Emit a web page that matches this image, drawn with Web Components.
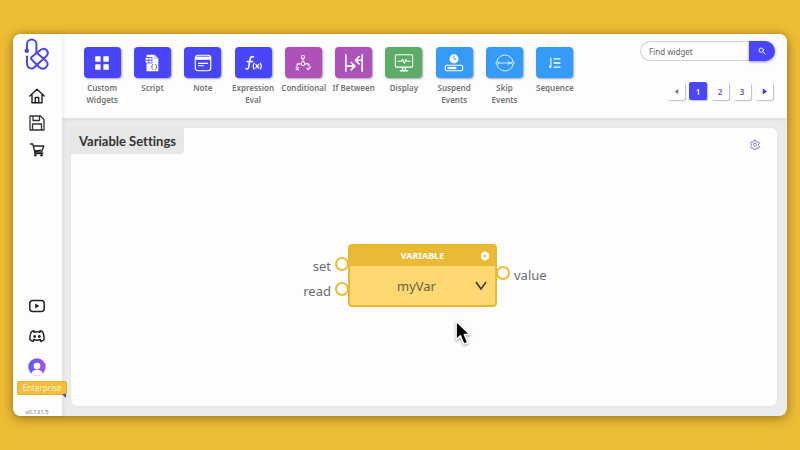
<!DOCTYPE html>
<html lang="en">
<head>
<meta charset="utf-8">
<meta name="viewport" content="width=device-width, initial-scale=1">
<title>Variable Settings</title>
<style>
  html { height: 100%; }
  body {
    margin: 0;
    height: 100%;
    background: #edbd35;
    color: #666;
    font-family: 'Noto Sans', 'Open Sans', sans-serif;
  }
</style>
</head>
<body>
<flow-app></flow-app>

<script>
const WIDGETS = [
  { label: 'Custom Widgets',  color: '#4945fb', icon: 'grid' },
  { label: 'Script',          color: '#4945fb', icon: 'script' },
  { label: 'Note',            color: '#4945fb', icon: 'note' },
  { label: 'Expression Eval', color: '#4945fb', icon: 'fx' },
  { label: 'Conditional',     color: '#ae52b9', icon: 'branch' },
  { label: 'If Between',      color: '#ae52b9', icon: 'between' },
  { label: 'Display',         color: '#5dac65', icon: 'display' },
  { label: 'Suspend Events',  color: '#359bf8', icon: 'suspend' },
  { label: 'Skip Events',     color: '#359bf8', icon: 'skip' },
  { label: 'Sequence',        color: '#359bf8', icon: 'sequence' },
]

// viewBox + body of every glyph
const ICONS = {
  logo: ['0 0 26 34', `<g fill="none" stroke="#4b48e8" stroke-width="2" stroke-linecap="round" stroke-linejoin="round">
    <path d="M3 12V6.200a4.700 4.700 0 0 1 9.400 0V14.500"/>
    <path d="M3 18.500V25c0 5.500 4.700 7 7.700 4L22 18.500c4.500-4.500-.7-10-5.500-6.500L7.700 19c-1 .8-1 1.600 0 2.500l7.300 7.500c4.800 4.500 11-1.200 7.300-6L12.400 14.500"/></g>
    <circle cx="2.800" cy="12.800" r="2.300" fill="#4b48e8"/>`],
  home: ['0 0 16 16', `<g fill="none" stroke="#222" stroke-width="1.400" stroke-linejoin="round" stroke-linecap="round">
    <path d="M.8 8 8 1.200 15.200 8M3 6.500v8.300h10V6.500"/><path d="M6.300 14.500v-5h3.400v5"/></g>`],
  save: ['0 0 16 16', `<g fill="none" stroke="#333" stroke-width="1.300" stroke-linejoin="round">
    <path d="M1 1h10.500L15 4.500V15H1z"/><path d="M4 1v4.500h6.500V1M3.500 15V9h9v6"/></g>`],
  cart: ['0 0 16 16', `<g fill="none" stroke="#222" stroke-width="1.300" stroke-linejoin="round" stroke-linecap="round">
    <path d="M1.500 2h2.300l2 8h7.500M4.200 4h10.500l-1.400 4.200-8 .6"/><path d="M5.800 10v1.500h8"/></g>
    <circle cx="6.300" cy="13.300" r="1.200" fill="#222"/><circle cx="12.500" cy="13.300" r="1.200" fill="#222"/>`],
  youtube: ['0 0 16 16', `<rect x=".8" y="2.500" width="14.400" height="11" rx="3" fill="none" stroke="#222" stroke-width="1.500"/>
    <path d="M6.200 5.600v4.800L10.400 8z" fill="#222"/>`],
  discord: ['0 0 16 16', `<g fill="none" stroke="#222" stroke-width="1.400" stroke-linejoin="round" stroke-linecap="round">
    <path d="M5 4.200c2-.6 4-.6 6 0M4.500 11.500c2.300.9 4.700.9 7 0"/>
    <path d="m5.600 4-.6-1.300C3.800 3 2.900 3.400 2.300 3.900 1.300 6 .7 8.500.8 11.600c1 1 2 1.500 3.300 1.900l1-1.800M10.400 4l.6-1.300c1.200.3 2.100.7 2.700 1.200 1 2.100 1.600 4.600 1.500 7.700-1 1-2 1.500-3.300 1.900l-1-1.800"/></g>
    <circle cx="5.700" cy="8.500" r="1.400" fill="#222"/><circle cx="10.300" cy="8.500" r="1.400" fill="#222"/>`],
  avatar: ['0 0 18 18', `<defs><linearGradient id="g"><stop stop-color="#5a5cf5"/><stop offset="1" stop-color="#a855e8"/></linearGradient>
    <clipPath id="c"><circle cx="9" cy="9" r="8.700"/></clipPath></defs>
    <circle cx="9" cy="9" r="8.700" fill="url(#g)"/>
    <g clip-path="url(#c)" fill="#fff"><circle cx="9" cy="8" r="3.300"/><path d="M3 18c0-4 2-6.200 6-6.200s6 2.200 6 6.200z"/></g>`],
  grid: ['0 0 22 22', `<g fill="#fff"><rect x="3.500" y="3.500" width="6" height="6" rx=".6"/><rect x="12.500" y="3.500" width="6" height="6" rx=".6"/>
    <rect x="3.500" y="12.500" width="6" height="6" rx=".6"/><rect x="12.500" y="12.500" width="6" height="6" rx=".6"/></g>`],
  script: ['0 0 22 22', `<path d="M5 2h9l4 4v14H5z" fill="#fff"/><path d="M14 2v4h4" fill="none" stroke="#8f8cfc" stroke-width=".8"/>
    <rect x="3.500" y="5" width="7.500" height="6" fill="#fff" stroke="#4945fb" stroke-width=".8"/><path d="M4 8h7M7.500 5v6" stroke="#4945fb" stroke-width=".9"/>
    <path d="M12.300 12c-2 1.500-2 5 0 6.500M14.500 12c2 1.500 2 5 0 6.500" fill="none" stroke="#4945fb" stroke-width="1"/>`],
  note: ['0 0 22 22', `<rect x="2.500" y="2.500" width="17" height="17" rx="3" fill="none" stroke="#fff" stroke-width="1.300"/>
    <path d="M2.500 4h17v3.500h-17z" fill="#fff"/><path d="M5.500 11.500h11M5.500 14h6.500" stroke="#fff" stroke-width="1.300"/>`],
  fx: ['0 0 22 22', `<g fill="none" stroke="#fff" stroke-linecap="round" stroke-width="1.800">
    <path d="M11.500 4.300c-2.300-1-3.200.2-3.700 2.700L6.300 15.300C5.800 17.700 5 18 3.300 17.300M4.800 9.300h5.700"/>
    <path stroke-width="1.400" d="M12.300 11.300c-1.300 2-1.300 4.600 0 6.400M19 11.300c1.300 2 1.300 4.600 0 6.400M14.200 12.700l3 3.500M17.200 12.700l-3 3.500"/></g>`],
  branch: ['0 0 22 22', `<g fill="none" stroke="#fff" stroke-width="1.200"><circle cx="11" cy="4.500" r="1.800"/>
    <path d="M11 6.500v3.200M4.500 15v-2q0-1 1-1H9M13 12h3.500q1 0 1 1v2"/><circle cx="11" cy="11.700" r="2"/><path d="m3 15.500 3.500 3.500M6.500 15.500 3 19M15 16.500l1.700 1.700 3-3.200"/></g>`],
  between: ['0 0 22 22', `<g fill="none" stroke="#fff" stroke-width="1.800" stroke-linecap="round" stroke-linejoin="round">
    <path d="M2 2v18M20 2v18M3 14.500h8.500M8 10.500l4 4-4 4M19 8h-6.500M16.500 4l-4 4 4 4"/></g>`],
  display: ['0 0 22 22', `<g fill="none" stroke="#fff" stroke-width="1.200" stroke-linejoin="round">
    <rect x="1.500" y="2" width="19" height="13.500" rx="1.200"/><path d="M4 9h4l1.500-2 2 4.500L13 7l1 2h4"/><path d="M9.500 15.500v3M12.500 15.500v3M6.500 19.500h9" stroke-width="1.500"/></g>`],
  suspend: ['0 0 22 22', `<circle cx="11" cy="6.500" r="5" fill="#fff"/><path d="M11 3.500v3.300h2.500" fill="none" stroke="#359bf8" stroke-width="1.100"/>
    <rect x="1.500" y="13.500" width="19" height="6" rx="1.500" fill="none" stroke="#fff" stroke-width="1.300"/><path d="M4 15.300h9.500v2.400H4z" fill="#fff"/>`],
  skip: ['0 0 22 22', `<g fill="none" stroke="#fff" stroke-width=".9"><path d="M2 9.500a9.200 9.200 0 0 1 18 0M2 12.500a9.200 9.200 0 0 0 18 0M4 11h14"/>
    <circle cx="2.500" cy="11" r="1.400"/><circle cx="19.500" cy="11" r="1.400"/><path d="m14 9 2.500 2-2.500 2"/></g>`],
  sequence: ['0 0 22 22', `<g fill="none" stroke="#fff" stroke-width="1.400"><path d="M9.500 6.500H17M9.500 11H17M9.500 15.500H17"/><path d="M6.500 5v11M4.300 14l2.200 2.300" stroke-width="1.200"/></g>`],
  search: ['0 0 10 10', `<g fill="none" stroke="#fff" stroke-width="1.100" stroke-linecap="round"><circle cx="4" cy="4" r="2.700"/><path d="M6.200 6.200 9 9"/></g>`],
  prev: ['0 0 8 8', `<path d="M6 1v6L2 4z" fill="#777"/>`],
  next: ['0 0 8 8', `<path d="M2 .5v7L6.800 4z" fill="#4a2fd0"/>`],
  gear: ['0 0 20 20', `<g fill="none" stroke="currentColor" stroke-width="1.700" stroke-linejoin="round"><circle cx="10" cy="10" r="3"/>
    <path d="M8 1.500h4l.6 2.700 1.900 1.100 2.600-.8 2 3.400-2 1.900v2.400l2 1.900-2 3.400-2.600-.8-1.900 1.100-.6 2.700H8l-.6-2.700-1.900-1.100-2.600.8-2-3.400 2-1.900V9.800l-2-1.900 2-3.400 2.600.8 1.900-1.100z"/></g>`],
  cog: ['0 0 20 20', `<path fill="#fff" fill-rule="evenodd" d="M7.500 1h5l.7 2.600 2.600-.8 2.700 4.200-1.800 3 1.800 3-2.700 4.200-2.600-.8-.7 2.600h-5l-.7-2.600-2.600.8L1.500 13l1.800-3-1.800-3 2.700-4.200 2.600.8zM10 7.500a2.500 2.500 0 1 0 0 5 2.500 2.500 0 0 0 0-5"/>`],
  pointer: ['0 0 16 26', `<path d="M2 2v17.500l4-3.800 3.200 7.800 3.800-1.600-3.300-7.600H15z" fill="#000" stroke="#fff" stroke-width="1.400" stroke-linejoin="round"/>`],
}

class UiIcon extends HTMLElement {
  connectedCallback() {
    if (!this.shadowRoot) this.attachShadow({ mode: 'open' })
    const [box, body] = ICONS[this.getAttribute('name')]
    this.shadowRoot.innerHTML = `
      <style>
        :host { display: block; flex-shrink: 0; }
        svg { display: block; width: 100%; height: 100%; }
      </style>
      <svg viewBox="${box}" aria-hidden="true">${body}</svg>
    `
  }
}

class SideBar extends HTMLElement {
  connectedCallback() {
    if (!this.shadowRoot) this.attachShadow({ mode: 'open' })
    this.shadowRoot.innerHTML = `
      <style>
        :host {
          display: flex;
          flex-direction: column;
          align-items: center;
          box-sizing: border-box;
          width: 49px;
          padding: 4px 1px 0 0;
          background: #fdfdfd;
          box-shadow: 1px 0 5px rgba(0,0,0,.08);
          border-radius: 8px 0 0 8px;
          z-index: 1;
        }
        a { display: block; }
        ui-icon { width: 16px; height: 16px; }
        .logo ui-icon { width: 26px; height: 34px; }
        nav { display: flex; flex-direction: column; gap: 11px; margin-top: 16px; }
        .social { display: flex; flex-direction: column; gap: 14px; align-items: center; margin-top: auto; }
        .social .user { width: 18px; height: 18px; }
        .plan {
          position: relative;
          box-sizing: border-box;
          width: 50px;
          margin: 5px -10px 0 0;
          border: 1px solid #e5b02c;
          border-radius: 2px;
          background: #f3bd3c;
          color: #fff5d8;
          font-size: 8px;
          line-height: 12px;
          text-align: center;
        }
        .plan::after {
          content: '';
          position: absolute;
          right: 0;
          top: 100%;
          border: 2px solid transparent;
          border-top-color: #3552a8;
          border-right-color: #3552a8;
        }
        .version { margin-top: 13px; font-size: 6px; line-height: 8px; color: #777; }
      </style>
      <a class="logo" href="#" aria-label="Start"><ui-icon name="logo"></ui-icon></a>
      <nav>
        <a href="#home" aria-label="Home"><ui-icon name="home"></ui-icon></a>
        <a href="#save" aria-label="Save"><ui-icon name="save"></ui-icon></a>
        <a href="#store" aria-label="Store"><ui-icon name="cart"></ui-icon></a>
      </nav>
      <div class="social">
        <a href="#videos" aria-label="Videos"><ui-icon name="youtube"></ui-icon></a>
        <a href="#chat" aria-label="Chat"><ui-icon name="discord"></ui-icon></a>
        <a href="#account" aria-label="Account"><ui-icon class="user" name="avatar"></ui-icon></a>
      </div>
      <span class="plan">Enterprise</span>
      <span class="version">v0.131.5</span>
    `
  }
}

class WidgetButton extends HTMLElement {
  connectedCallback() {
    if (!this.shadowRoot) this.attachShadow({ mode: 'open' })
    this.shadowRoot.innerHTML = `
      <style>
        :host { display: block; min-width: 0; }
        button {
          display: flex;
          flex-direction: column;
          align-items: center;
          gap: 4px;
          width: 100%;
          padding: 0;
          border: 0;
          background: none;
          color: #747474;
          font: 600 8px/12px 'Noto Sans', 'Open Sans', sans-serif;
          cursor: pointer;
        }
        .tile {
          display: grid;
          place-items: center;
          width: 37px;
          height: 31px;
          border-radius: 4px;
          background: ${this.getAttribute('color')};
          box-shadow: 1px 1px 2px rgba(60,60,110,.45);
        }
        .label { max-width: 44px; }
        ui-icon { width: 20px; height: 20px; }
      </style>
      <button type="button">
        <span class="tile"><ui-icon name="${this.getAttribute('icon')}"></ui-icon></span>
        <span class="label"><slot></slot></span>
      </button>
    `
  }
}

class WidgetSearch extends HTMLElement {
  connectedCallback() {
    if (!this.shadowRoot) this.attachShadow({ mode: 'open' })
    this.shadowRoot.innerHTML = `
      <style>
        :host { display: block; }
        form { display: flex; width: 135px; height: 20px; }
        input {
          flex: 1;
          min-width: 0;
          box-sizing: border-box;
          padding: 0 8px;
          border: 1px solid #d0d0d0;
          border-right: 0;
          border-radius: 10px 0 0 10px;
          background: #fefefe;
          color: #555;
          font: 8px 'Noto Sans', 'Open Sans', sans-serif;
          outline: 0;
        }
        input::placeholder { color: #666; opacity: 1; }
        button {
          display: grid;
          place-items: center;
          width: 26px;
          padding: 0;
          border: 0;
          border-radius: 0 10px 10px 0;
          background: #4945fb;
          box-shadow: 0 1px 3px rgba(73,69,251,.6);
        }
        ui-icon { width: 8px; height: 8px; }
      </style>
      <form onsubmit="return false">
        <input type="text" placeholder="Find widget" aria-label="Find widget">
        <button aria-label="Search"><ui-icon name="search"></ui-icon></button>
      </form>
    `
  }
}

class PageSwitch extends HTMLElement {
  connectedCallback() {
    if (!this.shadowRoot) this.attachShadow({ mode: 'open' })
    this.shadowRoot.innerHTML = `
      <style>
        :host { display: flex; gap: 4px; }
        button {
          display: grid;
          place-items: center;
          width: 18px;
          height: 18px;
          padding: 0;
          border: 0;
          border-radius: 2px;
          background: #fdfdfd;
          box-shadow: 1px 1px 1px rgba(0,0,0,.25);
          color: #6a58c4;
          font: 600 8px 'Noto Sans', 'Open Sans', sans-serif;
        }
        .on { background: #4945fb; color: #fff; }
        ui-icon { width: 7px; height: 7px; }
      </style>
      <button type="button" aria-label="Previous"><ui-icon name="prev"></ui-icon></button>
      ${[1, 2, 3].map(n => `<button type="button" class="${n === 1 ? 'on' : ''}">${n}</button>`).join('')}
      <button type="button" aria-label="Next"><ui-icon name="next"></ui-icon></button>
    `
  }
}

class ToolBar extends HTMLElement {
  connectedCallback() {
    if (!this.shadowRoot) this.attachShadow({ mode: 'open' })
    this.shadowRoot.innerHTML = `
      <style>
        :host {
          display: flex;
          justify-content: space-between;
          box-sizing: border-box;
          min-height: 84px;
          padding: 0 12px 0 15px;
          background: #fdfdfd;
          border-radius: 0 8px 0 0;
          box-shadow: 0 1px 4px rgba(0,0,0,.08);
        }
        .widgets {
          display: grid;
          grid-template-columns: repeat(10, 1fr);
          width: 503px;
          padding-top: 13px;
        }
        .tools {
          display: flex;
          flex-direction: column;
          align-items: flex-end;
          gap: 21px;
          padding-top: 7px;
        }
        page-switch { margin-right: 2px; }
      </style>
      <div class="widgets">
        ${WIDGETS.map(w => `<widget-button icon="${w.icon}" color="${w.color}">${w.label}</widget-button>`).join('')}
      </div>
      <div class="tools">
        <widget-search></widget-search>
        <page-switch></page-switch>
      </div>
    `
  }
}

class FlowNode extends HTMLElement {
  connectedCallback() {
    if (!this.shadowRoot) this.attachShadow({ mode: 'open' })
    this.shadowRoot.innerHTML = `
      <style>
        :host { display: flex; font-size: 13px; line-height: 18px; color: #6c6c6c; }
        .ports { display: flex; flex-direction: column; gap: 7px; padding-top: 13px; width: 50px; }
        .ports.out { padding-top: 22px; }
        .port { display: flex; justify-content: flex-end; gap: 4px; margin-right: -1px; }
        .out .port { justify-content: flex-start; margin: 0 0 0 -1px; }
        .dot {
          box-sizing: border-box;
          flex-shrink: 0;
          width: 14px;
          height: 14px;
          border: 2px solid #ecbc38;
          border-radius: 50%;
          background: #fff;
          z-index: 1;
        }
        .box {
          box-sizing: border-box;
          width: 149px;
          height: 63px;
          border: 2px solid #e9b833;
          border-radius: 4px;
          background: #fed971;
        }
        header {
          display: grid;
          grid-template-columns: 20px 1fr 20px;
          align-items: center;
          height: 20px;
          background: #ebba35;
          color: #fff;
          font-size: 9px;
          font-weight: 700;
          text-align: center;
        }
        header button { display: grid; place-items: center; grid-column: 3; grid-row: 1; height: 20px; padding: 0; border: 0; background: none; }
        header span { grid-column: 2; grid-row: 1; }
        header ui-icon { width: 10px; height: 10px; }
        .pick { display: grid; align-items: center; height: 39px; }
        select, .pick svg { grid-area: 1 / 1; }
        select {
          appearance: none;
          width: 100%;
          height: 100%;
          padding: 0 24px 0 12px;
          border: 0;
          background: none;
          color: #6b6046;
          font: 13px 'Noto Sans', 'Open Sans', sans-serif;
          text-align-last: center;
        }
        .pick svg { justify-self: end; width: 12px; height: 9px; margin-right: 8px; pointer-events: none; }
      </style>
      <div class="ports">
        <div class="port"><span>set</span><i class="dot"></i></div>
        <div class="port"><span>read</span><i class="dot"></i></div>
      </div>
      <div class="box">
        <header><span>VARIABLE</span><button type="button" aria-label="Settings"><ui-icon name="cog"></ui-icon></button></header>
        <div class="pick">
          <select aria-label="Variable"><option>myVar</option></select>
          <svg viewBox="0 0 12 9"><path d="m1 1 5 7 5-7" fill="none" stroke="#333" stroke-width="1.500"/></svg>
        </div>
      </div>
      <div class="ports out">
        <div class="port"><i class="dot"></i><span>value</span></div>
      </div>
    `
  }
}

class FlowCanvas extends HTMLElement {
  connectedCallback() {
    if (!this.shadowRoot) this.attachShadow({ mode: 'open' })
    this.shadowRoot.innerHTML = `
      <style>
        :host {
          display: block;
          position: relative;
          background: #fdfdfd;
          border-radius: 0 6px 6px 6px;
          box-shadow: 0 0 3px rgba(0,0,0,.06);
        }
        .head { display: flex; justify-content: space-between; align-items: flex-start; }
        h1 {
          margin: 0;
          padding: 0 8px;
          border-radius: 0 0 4px 0;
          background: #e7e7e7;
          color: #333;
          font: 700 13px/26px Lato, sans-serif;
          font-variant-ligatures: none;
        }
        .head button { margin: 11px 17px 0 0; padding: 0; border: 0; background: none; color: #6a5fd0; }
        .head ui-icon { width: 10px; height: 11px; }
        /* free canvas: items sit at their own coordinates */
        flow-node { position: absolute; left: 227px; top: 116px; }
        .pointer {
          position: absolute;
          left: 383px;
          top: 191px;
          width: 17px;
          height: 28px;
          filter: drop-shadow(0 1px 1px rgba(0,0,0,.4));
        }
      </style>
      <div class="head">
        <h1><slot></slot></h1>
        <button type="button" aria-label="Canvas settings"><ui-icon name="gear"></ui-icon></button>
      </div>
      <flow-node></flow-node>
      <ui-icon class="pointer" name="pointer"></ui-icon>
    `
  }
}

class FlowApp extends HTMLElement {
  connectedCallback() {
    if (!this.shadowRoot) this.attachShadow({ mode: 'open' })
    this.shadowRoot.innerHTML = `
      <style>
        :host { display: flex; box-sizing: border-box; min-height: 100%; padding: 34px 13px; }
        .window {
          flex: 1;
          display: flex;
          min-width: 0;
          border-radius: 8px;
          background: #ebebeb;
          box-shadow: 0 2px 12px rgba(90,60,0,.6);
        }
        main { flex: 1; display: flex; flex-direction: column; min-width: 0; }
        flow-canvas { flex: 1; margin: 10px 10px 10px 9px; }
      </style>
      <div class="window">
        <side-bar></side-bar>
        <main>
          <tool-bar></tool-bar>
          <flow-canvas>Variable Settings</flow-canvas>
        </main>
      </div>
    `
  }
}

customElements.define('ui-icon', UiIcon)
customElements.define('side-bar', SideBar)
customElements.define('widget-button', WidgetButton)
customElements.define('widget-search', WidgetSearch)
customElements.define('page-switch', PageSwitch)
customElements.define('tool-bar', ToolBar)
customElements.define('flow-node', FlowNode)
customElements.define('flow-canvas', FlowCanvas)
customElements.define('flow-app', FlowApp)
</script>
</body>
</html>
